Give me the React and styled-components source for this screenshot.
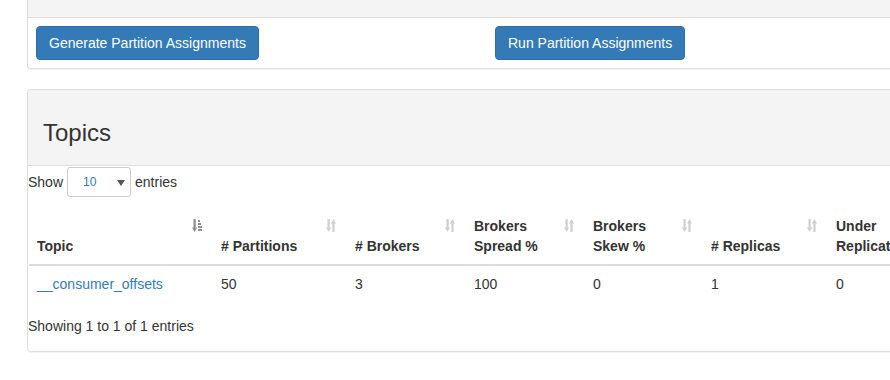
import React from "react";
import styled, { createGlobalStyle } from "styled-components";

const GlobalStyle = createGlobalStyle`
  html, body {
    margin: 0;
    padding: 0;
    background: #fff;
    overflow: hidden;
  }
  body {
    font-family: "Liberation Sans", Arial, sans-serif;
    font-size: 14px;
    line-height: 20px;
    color: #333;
  }
`;

const Page = styled.div`
  width: 1240px;
  padding-left: 27px;
`;

const Panel = styled.section`
  border: 1px solid #ddd;
  border-top: ${(p) => (p.$clipped ? "none" : "1px solid #ddd")};
  border-radius: ${(p) => (p.$clipped ? "0 0 4px 4px" : "4px")};
  box-shadow: 0 1px 1px rgba(0, 0, 0, 0.05);
  margin-bottom: 20px;
  background: #fff;
`;

const PanelHeading = styled.div`
  background: #f4f4f4;
  border-bottom: 1px solid #ddd;
  height: ${(p) => p.$height}px;
  padding: 0 15px;
  border-radius: ${(p) => (p.$clipped ? "0" : "3px 3px 0 0")};
`;

const Title = styled.h3`
  margin: 0;
  padding-top: 30px;
  font-size: 24px;
  font-weight: 500;
  line-height: 26px;
  color: #333;
`;

const ActionBody = styled.div`
  padding: 8px;
  display: grid;
  grid-template-columns: 459px 459px;
`;

const Button = styled.button`
  justify-self: start;
  height: 34px;
  padding: 6px 12px;
  font-family: inherit;
  font-size: 14px;
  line-height: 20px;
  color: #fff;
  background: #337ab7;
  border: 1px solid #2e6da4;
  border-radius: 4px;
  cursor: pointer;
`;

const Toolbar = styled.div`
  display: flex;
  align-items: center;
  height: 32px;
  gap: 4px;
`;

const SelectBox = styled.div`
  position: relative;
  width: 64px;
  height: 30px;
  box-sizing: border-box;
  border: 1px solid #ccc;
  border-radius: 3px;
  color: #337ab7;
  font-size: 12px;
  line-height: 28px;
  padding-left: 15px;
  &::after {
    content: "";
    position: absolute;
    right: 5px;
    top: 12px;
    border-left: 4px solid transparent;
    border-right: 4px solid transparent;
    border-top: 6px solid #555;
  }
`;

const Table = styled.table`
  table-layout: fixed;
  border-collapse: collapse;
  margin: 10px 0 0 1px;
  width: ${(p) => p.$width}px;
`;

const Th = styled.th`
  position: relative;
  text-align: left;
  vertical-align: bottom;
  font-weight: bold;
  padding: 8px 30px 8px 8px;
  border-bottom: 2px solid #ddd;
  line-height: 20px;
`;

const SortMark = styled.svg`
  position: absolute;
  top: 11px;
  right: 11px;
  width: 10px;
  height: 14px;
  color: ${(p) => (p.$active ? "#8f8f8f" : "#d0d0d0")};
`;

const Td = styled.td`
  padding: 8px;
  line-height: 20px;
  vertical-align: top;
`;

const TopicLink = styled.a`
  color: #337ab7;
  text-decoration: none;
`;

const Info = styled.div`
  padding: 14px 0 15px 0;
  line-height: 20px;
`;

const SortIcon = ({ active }) =>
  active ? (
    <SortMark $active viewBox="0 0 10 14" fill="currentColor">
      <rect x="1.5" y="0" width="2.2" height="9" />
      <polygon points="0,8.5 5.2,8.5 2.6,13" />
      <rect x="6" y="1" width="2" height="2" />
      <rect x="6" y="4" width="3" height="2" />
      <rect x="6" y="7" width="4" height="2" />
      <rect x="6" y="10" width="4" height="2" />
    </SortMark>
  ) : (
    <SortMark viewBox="0 0 10 14" fill="currentColor">
      <rect x="1.5" y="0" width="2.2" height="9" />
      <polygon points="0,8.5 5.2,8.5 2.6,13" />
      <rect x="6.4" y="4" width="2.2" height="9" />
      <polygon points="4.9,4.5 10,4.5 7.5,0" />
    </SortMark>
  );

const columns = [
  { label: "Topic", width: 184, active: true },
  { label: "# Partitions", width: 134 },
  { label: "# Brokers", width: 119 },
  { label: "Brokers Spread %", width: 119 },
  { label: "Brokers Skew %", width: 118 },
  { label: "# Replicas", width: 125 },
  { label: "Under Replicated %", width: 140 },
  { label: "Producer Message/Sec", width: 150 },
  { label: "Summed Recent Offsets", width: 150 },
];

const rows = [["__consumer_offsets", "50", "3", "100", "0", "1", "0", "0.00", "0"]];

export default function App() {
  const tableWidth = columns.reduce((sum, c) => sum + c.width, 0);
  return (
    <Page>
      <GlobalStyle />
      <Panel $clipped>
        <PanelHeading $clipped $height={17} />
        <ActionBody>
          <Button>Generate Partition Assignments</Button>
          <Button>Run Partition Assignments</Button>
        </ActionBody>
      </Panel>

      <Panel>
        <PanelHeading $height={75}>
          <Title>Topics</Title>
        </PanelHeading>
        <Toolbar>
          <span>Show</span>
          <SelectBox>10</SelectBox>
          <span>entries</span>
        </Toolbar>
        <Table $width={tableWidth}>
          <colgroup>
            {columns.map((c) => (
              <col key={c.label} style={{ width: c.width }} />
            ))}
          </colgroup>
          <thead>
            <tr>
              {columns.map((c) => (
                <Th key={c.label}>
                  {c.label}
                  <SortIcon active={c.active} />
                </Th>
              ))}
            </tr>
          </thead>
          <tbody>
            {rows.map((r) => (
              <tr key={r[0]}>
                <Td>
                  <TopicLink href="#">{r[0]}</TopicLink>
                </Td>
                {r.slice(1).map((v, i) => (
                  <Td key={i}>{v}</Td>
                ))}
              </tr>
            ))}
          </tbody>
        </Table>
        <Info>Showing 1 to 1 of 1 entries</Info>
      </Panel>
    </Page>
  );
}
